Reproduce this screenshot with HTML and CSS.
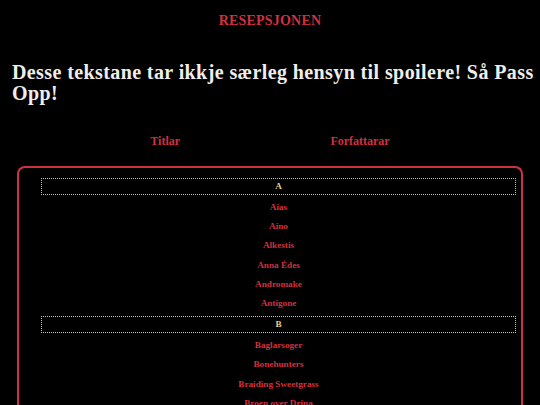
FILE: index.html
```html
<!DOCTYPE html>
<html lang="nn">
<head>
<meta charset="utf-8">
<title>Resepsjonen</title>
<link rel="stylesheet" href="styles.css">
</head>
<body>
<header class="site-header">
  <a class="site-title" href="#">RESEPSJONEN</a>
</header>
<h1 class="warning">Desse tekstane tar ikkje særleg hensyn til spoilere! Så Pass Opp!</h1>
<nav class="tabs">
  <a class="tab" href="#">Titlar</a>
  <a class="tab" href="#">Forfattarar</a>
</nav>
<section class="catalog">
  <ul class="list">
    <li class="letter">A</li>
    <li class="item"><a href="#">Aias</a></li>
    <li class="item"><a href="#">Aino</a></li>
    <li class="item"><a href="#">Alkestis</a></li>
    <li class="item"><a href="#">Anna Édes</a></li>
    <li class="item"><a href="#">Andromake</a></li>
    <li class="item"><a href="#">Antigone</a></li>
    <li class="letter">B</li>
    <li class="item"><a href="#">Baglarsoger</a></li>
    <li class="item"><a href="#">Bonehunters</a></li>
    <li class="item"><a href="#">Braiding Sweetgrass</a></li>
    <li class="item"><a href="#">Broen over Drina</a></li>
    <li class="item"><a href="#">Brødrene Karamazov</a></li>
  </ul>
</section>
</body>
</html>
```
FILE: styles.css
```css
html, body {
  margin: 0;
  padding: 0;
  background: #000;
}
body {
  font-family: "Liberation Serif", "Times New Roman", serif;
  color: #f0eeec;
  overflow: hidden;
  height: 405px;
}
a {
  color: #d2303e;
  text-decoration: none;
}
.site-header {
  padding-top: 11px;
  text-align: center;
}
.site-title {
  font-size: 14px;
  line-height: 16px;
  font-weight: bold;
  letter-spacing: 0.2px;
}
.warning {
  margin: 33px 4px 0 12px;
  font-size: 20px;
  line-height: 21px;
  font-weight: bold;
  letter-spacing: 0.4px;
  color: #f0eeec;
}
.tabs {
  margin-top: 30px;
  display: flex;
  justify-content: space-evenly;
}
.tab {
  font-size: 12px;
  line-height: 15px;
  font-weight: bold;
}
.catalog {
  margin: 17px 17px 0 17px;
  border: 2px solid #cc3240;
  border-bottom: none;
  border-radius: 8px 8px 0 0;
  padding: 7px 5px 0 22px;
}
.list {
  list-style: none;
  margin: 0;
  padding: 0;
  text-align: center;
  font-size: 9.2px;
  font-weight: bold;
}
.letter {
  margin: 3px 0;
  border: 1px dotted #d4c47c;
  color: #e0d08e;
  line-height: 15px;
}
.item {
  line-height: 19.2px;
}
```
